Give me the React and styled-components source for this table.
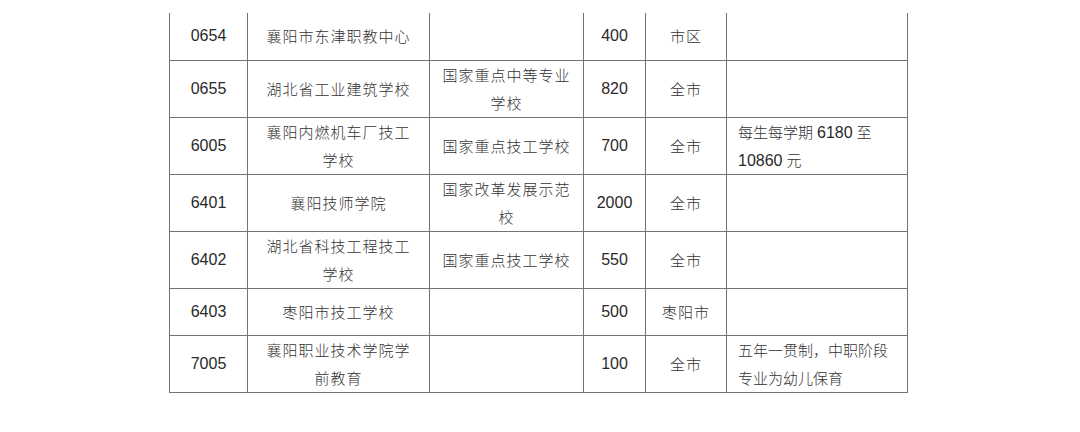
import React from 'react'
import styled, { createGlobalStyle } from 'styled-components'

//Componentes
const GlobalStyle = createGlobalStyle`
    html, body {
        margin: 0;
        padding: 0;
        background: #ffffff;
    }
`;

const Page = styled.div`
    width: 1080px;
    height: 432px;
    box-sizing: border-box;
    padding: 13px 0 0 169px;
    background: #fff;
    overflow: hidden;
`;

const Table = styled.table`
    border-collapse: collapse;
    table-layout: fixed;
    width: 738px;

    td{
        border: 1px solid #737373;
        padding: 0;
        vertical-align: middle;
        line-height: 28px;
    }

    tr:first-child td{
        border-top: none;
    }
`;

const Col = styled.col`
    width: ${(p) => p.$w}px;
`;

const Row = styled.tr`
    height: ${(p) => (p.$short ? '47px' : '57px')};
`;

const NumCell = styled.td`
    text-align: center;
    font-family: "Liberation Sans", Arial, sans-serif;
    font-size: 16px;
    color: #2a2a2a;
`;

const TextCell = styled.td`
    text-align: center;
    && { padding: 0 ${(p) => p.$pad}px; }
    font-family: "Noto Sans CJK SC", sans-serif;
    font-size: 15px;
    font-weight: 300;
    letter-spacing: 1px;
    color: #333;
`;

const NoteCell = styled.td`
    text-align: left;
    && { padding: 0 10px 0 11px; }
    font-family: "Noto Sans CJK SC", sans-serif;
    font-size: 15px;
    font-weight: 300;
    color: #333;
`;

const Num = styled.span`
    font-family: "Liberation Sans", Arial, sans-serif;
    font-size: 16px;
    font-weight: 400;
    color: #2a2a2a;
    margin: 0 4px 0 ${(p) => (p.$lead ? '0' : '4px')};
`;

// each line is its own block so mixed fonts don't grow the line box
const Line = styled.div`
    height: 28px;
    white-space: nowrap;
`;

const widths = [78, 182, 154, 62, 81, 181];

const rows = [
    { code: '0654', name: '襄阳市东津职教中心', level: '', count: '400', area: '市区', note: null, short: true },
    { code: '0655', name: '湖北省工业建筑学校', level: '国家重点中等专业学校', count: '820', area: '全市', note: null },
    { code: '6005', name: '襄阳内燃机车厂技工学校', level: '国家重点技工学校', count: '700', area: '全市',
        note: <><Line>每生每学期<Num>6180</Num>至</Line><Line><Num $lead>10860</Num>元</Line></> },
    { code: '6401', name: '襄阳技师学院', level: '国家改革发展示范校', count: '2000', area: '全市', note: null },
    { code: '6402', name: '湖北省科技工程技工学校', level: '国家重点技工学校', count: '550', area: '全市', note: null },
    { code: '6403', name: '枣阳市技工学校', level: '', count: '500', area: '枣阳市', note: null, short: true },
    { code: '7005', name: '襄阳职业技术学院学前教育', level: '', count: '100', area: '全市', note: '五年一贯制，中职阶段专业为幼儿保育' },
];

const App = () => {
    return (
        <Page>
            <GlobalStyle />
            <Table>
                <colgroup>
                    {widths.map((w, i) => <Col key={i} $w={w} />)}
                </colgroup>
                <tbody>
                    {rows.map((r) => (
                        <Row key={r.code} $short={r.short}>
                            <NumCell>{r.code}</NumCell>
                            <TextCell $pad={12}>{r.name}</TextCell>
                            <TextCell $pad={8}>{r.level}</TextCell>
                            <NumCell>{r.count}</NumCell>
                            <TextCell $pad={4}>{r.area}</TextCell>
                            <NoteCell>{r.note}</NoteCell>
                        </Row>
                    ))}
                </tbody>
            </Table>
        </Page>
    )
}

export default App
